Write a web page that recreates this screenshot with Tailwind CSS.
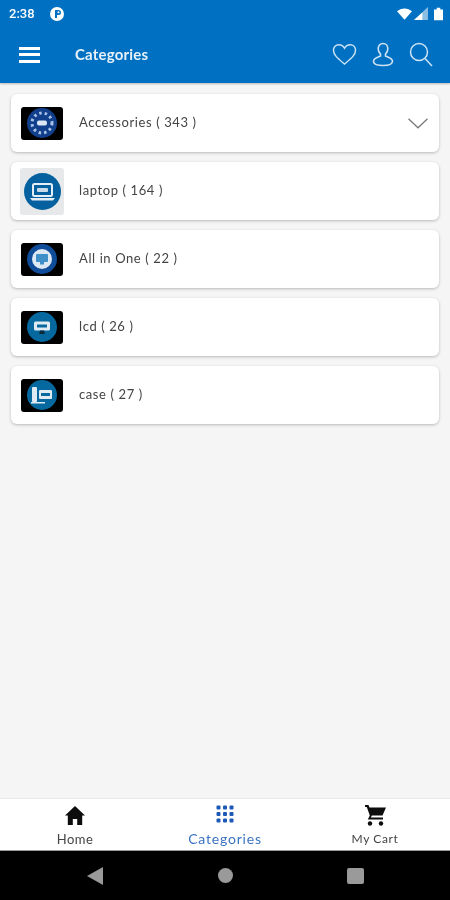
<!DOCTYPE html>
<html lang="en">
<head>
    <meta charset="UTF-8">
    <meta name="viewport" content="width=device-width, initial-scale=1.0">
    <title>Categories</title>
    <script src="https://cdn.jsdelivr.net/npm/@tailwindcss/browser@4"></script>
</head>
<body class="bg-[#f5f5f5] font-['Lato',sans-serif]">
<div class="w-[450px] h-[900px] flex flex-col overflow-hidden blur-[0.4px]">

    <!-- Status bar + toolbar -->
    <header class="h-[83px] shrink-0 bg-[#0071c2] shadow-[0_1px_2px_rgba(0,0,0,0.25)] text-white">
        <div class="h-[27px] flex items-center pl-[9px] pr-[7px] font-['Roboto',sans-serif]">
            <span class="text-[13px] font-medium w-[41px]">2:38</span>
            <span class="w-[14px] h-[14px] rounded-full bg-white flex items-center justify-center">
                <svg width="9" height="9" viewBox="0 0 9 9"><path d="M2 9V1h3.500a2.500 2.500 0 0 1 0 5H4v3z" fill="#0071c2"/><circle cx="5.500" cy="3.300" r="1" fill="#fff"/></svg>
            </span>
            <div class="ml-auto flex items-center">
                <svg width="15" height="12" viewBox="0 0 17 13"><path d="M0 3.500C4.500-1 12.500-1 17 3.500L8.500 13z" fill="#fff"/></svg>
                <svg class="ml-[2px]" width="14" height="13" viewBox="0 0 15 14"><path d="M15 0v14H0z" fill="#fff" fill-opacity=".55"/><path d="M9 6v8H0z" fill="#fff"/></svg>
                <svg class="ml-[6px]" width="9" height="14" viewBox="0 0 10 14"><path d="M3 0h4v2h3v12H0V2h3z" fill="#fff"/></svg>
            </div>
        </div>
        <div class="h-[55px] flex items-center">
            <div class="ml-[19px] w-[21px] flex flex-col gap-[3.500px]">
                <span class="h-[3px] bg-white"></span>
                <span class="h-[3px] bg-white"></span>
                <span class="h-[3px] bg-white"></span>
            </div>
            <span class="ml-[35px] text-[15px] font-bold tracking-[0.2px] text-white/90">Categories</span>
            <div class="ml-auto mr-[17px] flex items-center text-[#cfe3f3]">
                <svg width="25" height="23" viewBox="0 0 26 24" fill="none" stroke="currentColor" stroke-width="1.500"><path d="M13 22C6 16 1.500 12.500 1.500 7.500 1.500 4 4 1.800 7 1.800c2.500 0 4.800 1.400 6 3.700 1.200-2.300 3.500-3.700 6-3.700 3 0 5.500 2.200 5.500 5.700C24.500 12.500 20 16 13 22z"/></svg>
                <svg class="ml-[15px]" width="22" height="25" viewBox="0 0 22 25" fill="none" stroke="currentColor" stroke-width="1.600"><path d="M11 1.500c3 0 4.800 2.300 4.800 5.200 0 2.500-1 4.300-2.300 5.500v1.800c2 .8 7 1.800 7 5.200 0 3-4 4.300-9.500 4.300S1.500 22.200 1.500 19.200c0-3.400 5-4.400 7-5.200v-1.800C7.200 11 6.200 9.200 6.200 6.700c0-2.900 1.800-5.200 4.800-5.200z"/></svg>
                <svg class="ml-[15px]" width="24" height="25" viewBox="0 0 24 25" fill="none" stroke="currentColor" stroke-width="1.500"><circle cx="10" cy="10" r="8.500"/><path d="M16 16.500l7 7.500"/></svg>
            </div>
        </div>
    </header>

    <!-- Category list -->
    <main class="flex-1 pt-[11px] px-[11px] flex flex-col gap-[10px]">
        <div class="h-[58px] bg-white rounded-[6px] shadow-[0_1px_3px_rgba(0,0,0,0.25)] flex items-center">
            <div class="ml-[10px] w-[42px] h-[33px] bg-black rounded-[3px] flex items-center justify-center">
                <svg width="30" height="30" viewBox="0 0 30 30"><circle cx="15" cy="15" r="15" fill="#123f8c"/><circle cx="15" cy="15" r="10" fill="none" stroke="#a9c3e6" stroke-width="3" stroke-dasharray="2.500 3"/><rect x="10" y="12.500" width="10" height="5" rx="2" fill="#dbe6f4"/></svg>
            </div>
            <span class="ml-[16px] text-[13px] text-[#444] tracking-[0.6px]">Accessories ( 343 )</span>
            <svg class="ml-auto mr-[11px]" width="20" height="11" viewBox="0 0 20 11" fill="none" stroke="#777" stroke-width="1.200"><path d="M.5.800 10 9.800 19.500.800"/></svg>
        </div>
        <div class="h-[58px] bg-white rounded-[6px] shadow-[0_1px_3px_rgba(0,0,0,0.25)] flex items-center">
            <div class="ml-[9px] w-[44px] h-[47px] bg-[#e6e8ea] rounded-[3px] flex items-center justify-center">
                <svg width="37" height="37" viewBox="0 0 37 37"><circle cx="18.500" cy="18.500" r="18.500" fill="#04609f"/><rect x="9" y="11" width="19" height="12" rx="1.500" fill="none" stroke="#e4eef6" stroke-width="2"/><rect x="13" y="15" width="11" height="4" rx="1" fill="#c8dbe9"/><path d="M6 25h25l-2 2.500H8z" fill="#e4eef6"/></svg>
            </div>
            <span class="ml-[15px] text-[13px] text-[#444] tracking-[0.6px]">laptop ( 164 )</span>
        </div>
        <div class="h-[58px] bg-white rounded-[6px] shadow-[0_1px_3px_rgba(0,0,0,0.25)] flex items-center">
            <div class="ml-[10px] w-[42px] h-[33px] bg-black rounded-[3px] flex items-center justify-center">
                <svg width="30" height="30" viewBox="0 0 30 30"><circle cx="15" cy="15" r="15" fill="#0f4c99"/><circle cx="15" cy="15" r="10" fill="#dce8f3"/><rect x="9" y="10" width="12" height="8" rx="1" fill="#3f8fc9"/><path d="M13 18h4v2.500h-4z" fill="#3f8fc9"/></svg>
            </div>
            <span class="ml-[16px] text-[13px] text-[#444] tracking-[0.6px]">All in One ( 22 )</span>
        </div>
        <div class="h-[58px] bg-white rounded-[6px] shadow-[0_1px_3px_rgba(0,0,0,0.25)] flex items-center">
            <div class="ml-[10px] w-[42px] h-[33px] bg-black rounded-[3px] flex items-center justify-center">
                <svg width="30" height="30" viewBox="0 0 30 30"><circle cx="15" cy="15" r="15" fill="#05699f"/><rect x="7" y="9.500" width="16" height="9" rx="1.500" fill="#dfeaf2"/><rect x="10" y="12.500" width="10" height="3" fill="#05699f"/><path d="M13 18.500h4l1 3.500h-6z" fill="#0a2a3d"/></svg>
            </div>
            <span class="ml-[16px] text-[13px] text-[#444] tracking-[0.6px]">lcd ( 26 )</span>
        </div>
        <div class="h-[58px] bg-white rounded-[6px] shadow-[0_1px_3px_rgba(0,0,0,0.25)] flex items-center">
            <div class="ml-[10px] w-[42px] h-[33px] bg-black rounded-[3px] flex items-center justify-center">
                <svg width="30" height="30" viewBox="0 0 30 30"><circle cx="15" cy="15" r="15" fill="#05699f"/><rect x="5" y="7" width="5" height="15" rx="1" fill="#dfeaf2"/><rect x="12" y="10" width="13" height="9" rx="1" fill="#dfeaf2"/><rect x="14" y="13" width="9" height="3" fill="#05699f"/><path d="M4 22h14v1.500H4z" fill="#dfeaf2"/></svg>
            </div>
            <span class="ml-[16px] text-[13px] text-[#444] tracking-[0.6px]">case ( 27 )</span>
        </div>
    </main>

    <!-- Bottom navigation -->
    <nav class="h-[53px] shrink-0 bg-white border-t border-[#e8e8e8] border-b border-b-[#999] grid grid-cols-3 text-center">
        <div class="flex flex-col items-center pt-[7px]">
            <svg width="20" height="19" viewBox="0 0 20 19"><path d="M10 0 0 9.500h2.800V19h5v-6h4.400v6h5V9.500H20z" fill="#0d0d0d"/></svg>
            <span class="mt-[7px] text-[13px] leading-[15px] text-[#444] tracking-[0.5px]">Home</span>
        </div>
        <div class="flex flex-col items-center pt-[6px]">
            <svg width="18" height="18" viewBox="0 0 18 18" fill="#1c58b5"><rect x="0.500" y="0.500" width="4" height="4" rx="1"/><rect x="7" y="0.500" width="4" height="4" rx="1"/><rect x="13.500" y="0.500" width="4" height="4" rx="1"/><rect x="0.500" y="7" width="4" height="4" rx="1"/><rect x="7" y="7" width="4" height="4" rx="1"/><rect x="13.500" y="7" width="4" height="4" rx="1"/><rect x="0.500" y="13.500" width="4" height="4" rx="1"/><rect x="7" y="13.500" width="4" height="4" rx="1"/><rect x="13.500" y="13.500" width="4" height="4" rx="1"/></svg>
            <span class="mt-[8px] text-[14px] leading-[15px] text-[#3b73c2] tracking-[0.8px]">Categories</span>
        </div>
        <div class="flex flex-col items-center pt-[6px]">
            <svg width="21" height="21" viewBox="0 0 21 21"><path d="M0 0h3.500l1 2.500H21l-3.500 8H6.800l-.9 2H18v2H2.800l2-4L1.800 2H0z" fill="#0d0d0d"/><circle cx="5" cy="18.500" r="2.200" fill="#0d0d0d"/><circle cx="16" cy="18.500" r="2.200" fill="#0d0d0d"/></svg>
            <span class="mt-[5px] text-[12px] leading-[15px] text-[#444] tracking-[0.6px]">My Cart</span>
        </div>
    </nav>

    <!-- Android navigation bar -->
    <div class="h-[49px] shrink-0 bg-black relative flex items-center">
        <svg class="ml-[87px]" width="16" height="18" viewBox="0 0 16 18"><path d="M16 0v18L0 9z" fill="#9a9a9a"/></svg>
        <span class="ml-[115px] w-[15px] h-[15px] rounded-full bg-[#9a9a9a]"></span>
        <span class="ml-[114px] w-[17px] h-[16px] rounded-[2px] bg-[#9a9a9a]"></span>
    </div>
</div>
</body>
</html>
